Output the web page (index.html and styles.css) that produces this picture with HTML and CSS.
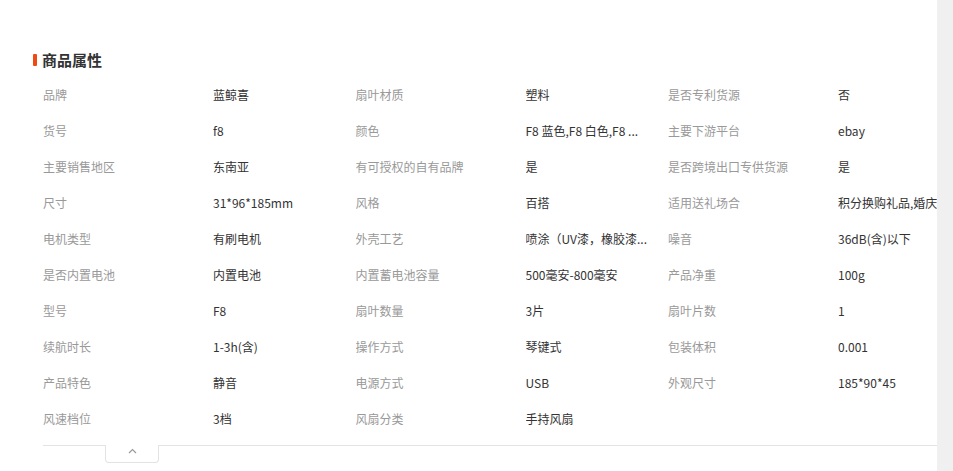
FILE: index.html
```html
<!DOCTYPE html>
<html lang="zh-CN">
<head>
<meta charset="utf-8">
<title>商品属性</title>
<link rel="stylesheet" href="styles.css">
</head>
<body>
<div class="page">
  <main class="main">
    <section class="attrs">
      <h2 class="attrs-title"><span class="title-mark"></span>商品属性</h2>
      <div class="attr-grid">
        <div class="label">品牌</div><div class="value">蓝鲸喜</div>
        <div class="label">扇叶材质</div><div class="value">塑料</div>
        <div class="label">是否专利货源</div><div class="value">否</div>

        <div class="label">货号</div><div class="value">f8</div>
        <div class="label">颜色</div><div class="value">F8 蓝色,F8 白色,F8 ...</div>
        <div class="label">主要下游平台</div><div class="value">ebay</div>

        <div class="label">主要销售地区</div><div class="value">东南亚</div>
        <div class="label">有可授权的自有品牌</div><div class="value">是</div>
        <div class="label">是否跨境出口专供货源</div><div class="value">是</div>

        <div class="label">尺寸</div><div class="value">31*96*185mm</div>
        <div class="label">风格</div><div class="value">百搭</div>
        <div class="label">适用送礼场合</div><div class="value clip">积分换购礼品,婚庆</div>

        <div class="label">电机类型</div><div class="value">有刷电机</div>
        <div class="label">外壳工艺</div><div class="value">喷涂（UV漆，橡胶漆...</div>
        <div class="label">噪音</div><div class="value">36dB(含)以下</div>

        <div class="label">是否内置电池</div><div class="value">内置电池</div>
        <div class="label">内置蓄电池容量</div><div class="value">500毫安-800毫安</div>
        <div class="label">产品净重</div><div class="value">100g</div>

        <div class="label">型号</div><div class="value">F8</div>
        <div class="label">扇叶数量</div><div class="value">3片</div>
        <div class="label">扇叶片数</div><div class="value">1</div>

        <div class="label">续航时长</div><div class="value">1-3h(含)</div>
        <div class="label">操作方式</div><div class="value">琴键式</div>
        <div class="label">包装体积</div><div class="value">0.001</div>

        <div class="label">产品特色</div><div class="value">静音</div>
        <div class="label">电源方式</div><div class="value">USB</div>
        <div class="label">外观尺寸</div><div class="value">185*90*45</div>

        <div class="label">风速档位</div><div class="value">3档</div>
        <div class="label">风扇分类</div><div class="value">手持风扇</div>
      </div>
      <div class="fold-bar">
        <button class="fold-tab" type="button" aria-label="收起">
          <svg class="chevron" width="9" height="6" viewBox="0 0 9 6"><polyline points="1,5 4.5,1.5 8,5" fill="none" stroke="#999" stroke-width="1.2"/></svg>
        </button>
      </div>
    </section>
  </main>
  <div class="scroll-strip"></div>
</div>
</body>
</html>
```

FILE: styles.css
```css
html, body {
  margin: 0;
  padding: 0;
  background: #fff;
}
body {
  font-family: "Noto Sans CJK SC", "Noto Sans", "Liberation Sans", sans-serif;
  font-size: 12px;
  color: #333;
}
.page {
  display: flex;
  width: 953px;
  height: 471px;
  overflow: hidden;
}
.main {
  width: 937px;
  flex: 0 0 937px;
  overflow: hidden;
  background: #fff;
}
.scroll-strip {
  flex: 0 0 16px;
  background: #f0f0f0;
}
.attrs {
  padding: 49px 0 0 33px;
}
.attrs-title {
  margin: 0;
  display: flex;
  align-items: center;
  height: 22px;
  font-size: 15px;
  font-weight: bold;
  color: #333;
  line-height: 22px;
}
.title-mark {
  display: inline-block;
  width: 4px;
  height: 12px;
  background: #f04a13;
  margin-right: 5px;
  border-radius: 1px;
}
.attr-grid {
  margin-top: 6px;
  padding-left: 10px;
  display: grid;
  grid-template-columns: 170px 142.5px 170px 142.5px 170px 142.5px;
  grid-auto-rows: 36px;
  width: 960px;
}
.label, .value {
  line-height: 36px;
  white-space: nowrap;
  overflow: hidden;
}
.label {
  color: #999;
}
.value {
  color: #333;
  padding-right: 10px;
}
.value.clip {
  padding-right: 0;
}
.fold-bar {
  margin: 8px 0 0 10px;
  border-top: 1px solid #e3e3e3;
  position: relative;
  height: 20px;
}
.fold-tab {
  position: absolute;
  left: 62px;
  top: -1px;
  width: 54px;
  height: 18px;
  padding: 0;
  margin: 0;
  background: #fff;
  border: 1px solid #e3e3e3;
  border-top: none;
  border-radius: 0 0 4px 4px;
  display: flex;
  justify-content: center;
  align-items: flex-start;
  padding-top: 3px;
  box-sizing: border-box;
  cursor: pointer;
}
.chevron {
  display: block;
}
```
